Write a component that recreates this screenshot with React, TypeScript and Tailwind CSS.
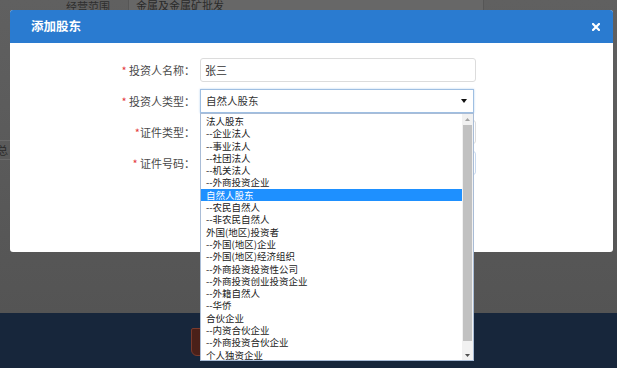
import React from 'react';

const options = [
  '法人股东',
  '--企业法人',
  '--事业法人',
  '--社团法人',
  '--机关法人',
  '--外商投资企业',
  '自然人股东',
  '--农民自然人',
  '--非农民自然人',
  '外国(地区)投资者',
  '--外国(地区)企业',
  '--外国(地区)经济组织',
  '--外商投资投资性公司',
  '--外商投资创业投资企业',
  '--外籍自然人',
  '--华侨',
  '合伙企业',
  '--内资合伙企业',
  '--外商投资合伙企业',
  '个人独资企业',
];

const selected = '自然人股东';

function Label({ text, tight }: { text: string; tight?: boolean }) {
  return (
    <div className="w-[185px] shrink-0 text-right text-[11px] text-[#4a4a4a]">
      <span className="text-[#e4393c]">*</span>
      {tight ? '' : ' '}
      {text}
    </div>
  );
}

function Dropdown() {
  return (
    <div className="absolute left-[200px] top-[113px] flex h-[248px] w-[274px] border border-[#a9bcd6] bg-white">
      <ul className="flex-1 pt-[1px]">
        {options.map((o) => (
          <li
            key={o}
            className={`h-[12.3px] overflow-hidden pl-[5px] text-[9.5px] leading-[12.3px] ${
              o === selected ? 'bg-[#1e90ff] text-white' : 'text-[#222]'
            }`}
          >
            {o}
          </li>
        ))}
      </ul>
      {/* scrollbar */}
      <div className="flex w-[11px] flex-col bg-[#f1f1f1]">
        <div className="flex h-[10px] items-center justify-center">
          <svg width="5" height="3" viewBox="0 0 5 3">
            <path d="M0 3 L2.5 0 L5 3 Z" fill="#a3a3a3" />
          </svg>
        </div>
        <div className="mx-[1px] mt-[1px] h-[216px] bg-[#c1c1c1]" />
        <div className="flex-1" />
        <div className="flex h-[10px] items-center justify-center">
          <svg width="5" height="3" viewBox="0 0 5 3">
            <path d="M0 0 L2.5 3 L5 0 Z" fill="#505050" />
          </svg>
        </div>
      </div>
    </div>
  );
}

function Modal() {
  return (
    <div className="absolute left-[10px] top-[10px] h-[242px] w-[603px] overflow-hidden rounded-[3px] bg-white">
      <div className="flex h-[33px] items-center justify-between bg-[#2a7bd0] pl-[21px] pr-[13px]">
        <span className="text-[12.5px] font-bold text-white">添加股东</span>
        <svg width="8" height="8" viewBox="0 0 8 8">
          <path d="M1 1 L7 7 M7 1 L1 7" stroke="#fff" strokeWidth="2.2" strokeLinecap="square" />
        </svg>
      </div>
      <div className="flex flex-col gap-[7px] pt-[15px]">
        <div className="flex h-[24px] items-center gap-[5px]">
          <Label text="投资人名称：" />
          <div className="flex h-[24px] w-[276px] items-center rounded-[3px] border border-[#dcdcdc] pl-[4px] text-[11px] text-[#333]">
            张三
          </div>
        </div>
        <div className="flex h-[24px] items-center gap-[5px]">
          <Label text="投资人类型：" />
          <div className="flex h-[24px] w-[274px] items-center justify-between border border-[#9fbfe2] pl-[5px] pr-[6px] text-[10.5px] text-[#333] shadow-[0_0_2px_#b8d3f0]">
            <span>自然人股东</span>
            <svg width="6" height="4" viewBox="0 0 6 4">
              <path d="M0 0 L3 4 L6 0 Z" fill="#111" />
            </svg>
          </div>
        </div>
        <div className="flex h-[24px] items-center gap-[5px]">
          <Label text="证件类型：" tight />
          <div className="h-[24px] w-[276px] rounded-[3px] border border-[#dcdcdc]" />
        </div>
        <div className="flex h-[24px] items-center gap-[5px]">
          <Label text="证件号码：" />
          <div className="h-[24px] w-[276px] rounded-[3px] border border-[#c9d9ee]" />
        </div>
      </div>
    </div>
  );
}

export default function App() {
  return (
    <div
      className="relative h-[368px] w-[617px] overflow-hidden"
      style={{ fontFamily: '"Noto Sans CJK SC", "Noto Sans", sans-serif' }}
    >
      {/* dimmed page behind the dialog */}
      <div className="flex h-full flex-col">
        <div className="flex flex-1 flex-col bg-gradient-to-b from-[#606060] to-[#545454]">
          <div className="-mt-[13px] flex h-[26px] items-center">
            <span className="w-[128px] pl-[66px] pt-[12px] text-[11px] text-[#2e2e2e]">经营范围</span>
            <div className="flex h-[26px] w-[356px] items-end border border-[#565656] bg-[#676767] pb-[1px] pl-[7px] text-[11px] leading-none text-[#2a2a2a]">
              金属及金属矿批发
            </div>
          </div>
          <div className="mt-[127px] flex h-[20px] w-[12px] items-center border-y border-[#6a6a6a] text-[11px] text-[#2a2a2a]">
            <span className="-ml-[3px]">总</span>
          </div>
        </div>
        <div className="h-[55px] bg-[#17263b] pl-[191px] pt-[15px]">
          <div className="h-[28px] w-[16px] rounded-b-[6px] rounded-t-[2px] border border-[#7a3a2c] bg-[#4a2019]" />
        </div>
      </div>
      <Modal />
      <Dropdown />
    </div>
  );
}
